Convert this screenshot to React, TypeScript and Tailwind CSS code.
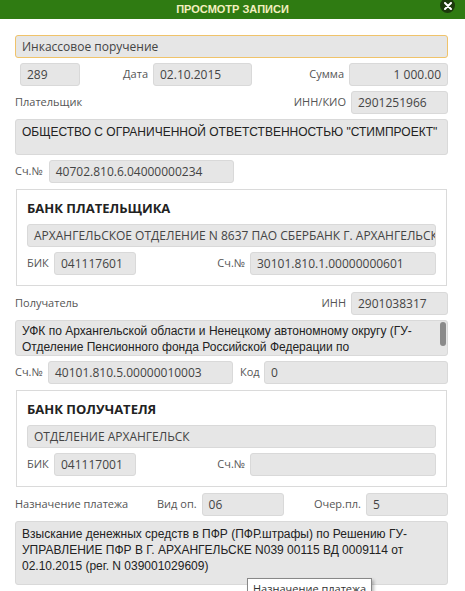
import React from "react"

const box = "h-[23px] rounded-[3px] bg-[#e6e6e6] border border-[#d9d9d9] px-[6px] flex items-center text-[12px] text-[#444] whitespace-nowrap overflow-hidden shrink-0"
const label = "text-[11px] text-[#555] whitespace-nowrap"
const arial = "font-['Liberation_Sans',Arial,sans-serif] text-[12px] leading-[16px] text-[#222]"

function Field({ value, className = "" }: { value?: string; className?: string }) {
  return <div className={`${box} ${className}`}>{value}</div>
}

function BankBlock({ title, name, bik, account }: { title: string; name: string; bik: string; account: string }) {
  return (
    <div className="mx-[1px] border border-[#dadada] p-[10px]">
      <div className="h-[18px] flex items-center text-[13px] font-bold text-[#222]">{title}</div>
      <div className="mt-[6px] flex flex-col gap-[5px]">
        <Field value={name} />
        <div className="flex items-center">
          <span className={`${label} w-[27px]`}>БИК</span>
          <Field value={bik} className="w-[82px]" />
          <div className="flex-1 flex items-center justify-end gap-[5px]">
            <span className={label}>Сч.№</span>
            <Field value={account} className="w-[186px]" />
          </div>
        </div>
      </div>
    </div>
  )
}

export default function App() {
  return (
    <div className="relative w-[465px] h-[591px] overflow-hidden bg-white font-['Open_Sans',sans-serif]">
      <div className="relative h-[19px] bg-[#2f7b12] flex items-center justify-center">
        <span className="font-['Liberation_Sans',Arial,sans-serif] font-bold text-[11px] text-[#f3efbf]">
          ПРОСМОТР ЗАПИСИ
        </span>
        <div className="absolute right-[10px] top-[-2px] w-[15px] h-[15px] rounded-full bg-[#1c3a0c] flex items-center justify-center">
          <svg width="8" height="8" viewBox="0 0 8 8">
            <path d="M1 1 7 7M7 1 1 7" stroke="#fff" strokeWidth="2" strokeLinecap="round" />
          </svg>
        </div>
      </div>

      <div className="pl-[15px] pr-[17px] pt-[16px] flex flex-col gap-[5px]">
        <div className="h-[23px] rounded-[3px] bg-[#e6e6e6] border border-[#f0c36a] px-[6px] flex items-center text-[12px] text-[#444]">
          Инкассовое поручение
        </div>

        <div className="flex items-center">
          <Field value="289" className="ml-[5px] w-[60px]" />
          <div className="w-[172px] flex items-center justify-end gap-[5px]">
            <span className={label}>Дата</span>
            <Field value="02.10.2015" className="w-[99px]" />
          </div>
          <div className="flex-1 flex items-center justify-end gap-[5px]">
            <span className={label}>Сумма</span>
            <Field value="1 000.00" className="w-[99px] justify-end" />
          </div>
        </div>

        <div className="flex items-center justify-between">
          <span className={label}>Плательщик</span>
          <div className="flex items-center gap-[5px]">
            <span className={label}>ИНН/КИО</span>
            <Field value="2901251966" className="w-[97px]" />
          </div>
        </div>

        <div className={`h-[36px] rounded-[3px] bg-[#e6e6e6] border border-[#d9d9d9] px-[6px] pt-[4px] ${arial} whitespace-nowrap overflow-hidden`}>
          ОБЩЕСТВО С ОГРАНИЧЕННОЙ ОТВЕТСТВЕННОСТЬЮ "СТИМПРОЕКТ"
        </div>

        <div className="flex items-center gap-[6px]">
          <span className={label}>Сч.№</span>
          <Field value="40702.810.6.04000000234" className="w-[185px]" />
        </div>

        <div className="pt-[1px]">
          <BankBlock
            title="БАНК ПЛАТЕЛЬЩИКА"
            name="АРХАНГЕЛЬСКОЕ ОТДЕЛЕНИЕ N 8637 ПАО СБЕРБАНК Г. АРХАНГЕЛЬСК"
            bik="041117601"
            account="30101.810.1.00000000601"
          />
        </div>

        <div className="flex items-center justify-between pt-[1px]">
          <span className={label}>Получатель</span>
          <div className="flex items-center gap-[5px]">
            <span className={label}>ИНН</span>
            <Field value="2901038317" className="w-[97px]" />
          </div>
        </div>

        <div className="relative h-[36px] rounded-[3px] bg-[#e6e6e6] border border-[#d9d9d9] overflow-hidden">
          <div className={`pl-[6px] pr-[14px] pt-[2px] ${arial}`}>
            УФК по Архангельской области и Ненецкому автономному округу (ГУ-Отделение Пенсионного фонда Российской Федерации по Архангельской области)
          </div>
          <div className="absolute right-[1px] top-[1px] w-[6px] h-[24px] rounded-[3px] bg-[#8a8a8a]" />
        </div>

        <div className="flex items-center">
          <span className={`${label} w-[33px]`}>Сч.№</span>
          <Field value="40101.810.5.00000010003" className="w-[185px]" />
          <span className={`${label} ml-[7px] w-[24px]`}>Код</span>
          <Field value="0" className="flex-1" />
        </div>

        <div className="pt-[1px]">
          <BankBlock title="БАНК ПОЛУЧАТЕЛЯ" name="ОТДЕЛЕНИЕ АРХАНГЕЛЬСК" bik="041117001" account="" />
        </div>

        <div className="flex items-center pt-[1px]">
          <span className={`${label} w-[142px]`}>Назначение платежа</span>
          <div className="flex items-center gap-[5px]">
            <span className={label}>Вид оп.</span>
            <Field value="06" className="w-[82px]" />
          </div>
          <div className="flex-1 flex items-center justify-end gap-[5px]">
            <span className={label}>Очер.пл.</span>
            <Field value="5" className="w-[82px]" />
          </div>
        </div>

        <div className="h-[64px] rounded-[3px] bg-[#e6e6e6] border border-[#d9d9d9] overflow-hidden">
          <div className={`pl-[6px] pr-[10px] pt-[4px] ${arial}`}>
            Взыскание денежных средств в ПФР (ПФР.штрафы) по Решению ГУ-УПРАВЛЕНИЕ ПФР В Г. АРХАНГЕЛЬСКЕ N039 00115 ВД 0009114 от 02.10.2015 (рег. N 039001029609)
          </div>
        </div>
      </div>

      <div className="absolute left-[247px] top-[578px] px-[5px] py-[2px] bg-white border border-[#888] shadow-[2px_2px_3px_rgba(0,0,0,0.25)] text-[11px] text-[#333] whitespace-nowrap">
        Назначение платежа
      </div>
    </div>
  )
}
